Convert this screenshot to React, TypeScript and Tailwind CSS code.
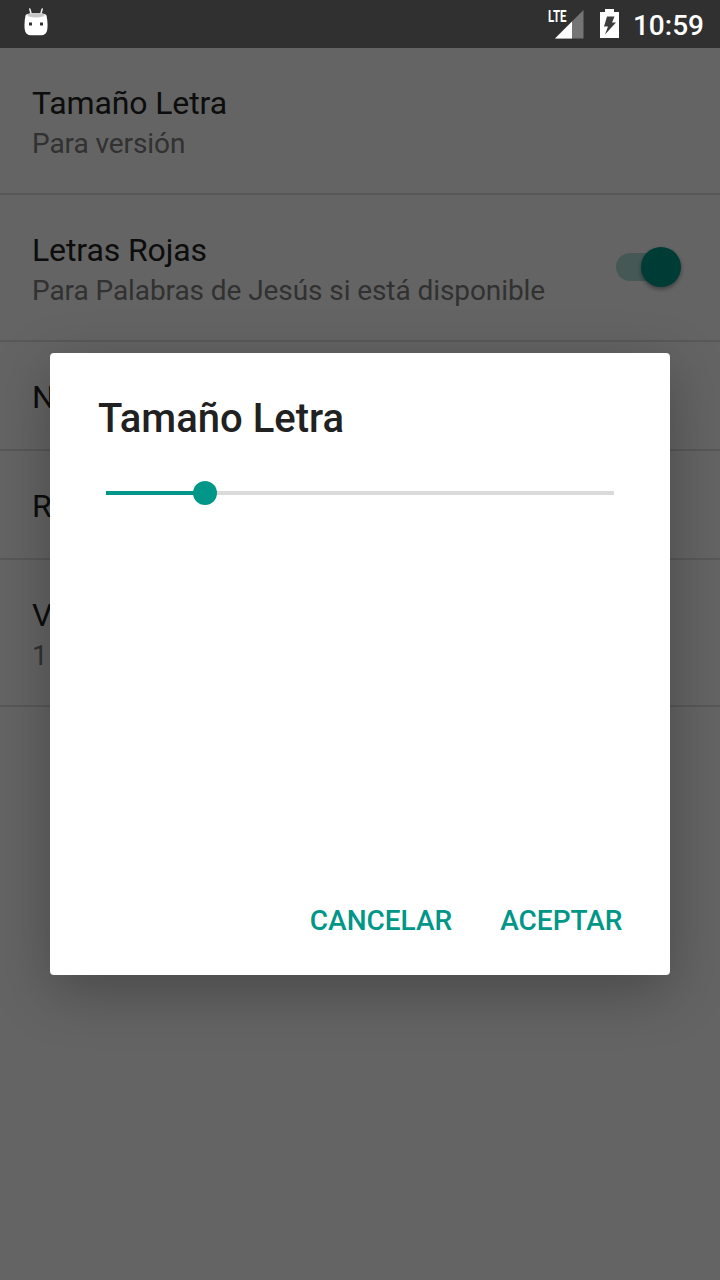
import { useState } from "react"
import type { ReactNode } from "react"

interface Preference {
  title: string
  summary?: string
  toggle?: boolean
}

const PREFERENCES: Preference[] = [
  { title: "Tamaño Letra", summary: "Para versión" },
  { title: "Letras Rojas", summary: "Para Palabras de Jesús si está disponible", toggle: true },
  { title: "N" },
  { title: "R" },
  { title: "V", summary: "1" },
]

export default function App() {
  return (
    <div className="relative flex h-[1280px] w-[720px] flex-col overflow-hidden bg-[#fafafa] font-['Roboto',sans-serif]">
      <StatusBar />
      <main className="flex flex-col">
        {PREFERENCES.map((pref) => (
          <PreferenceRow key={pref.title} {...pref} />
        ))}
      </main>

      {/* Backdrop and dialog */}
      <div className="absolute inset-x-0 top-12 bottom-0 bg-black/60 px-[50px] pt-[305px]">
        <FontSizeDialog />
      </div>
    </div>
  )
}

function StatusBar() {
  return (
    <header className="flex h-12 shrink-0 items-center bg-[#303030] pr-4 pl-6 text-white">
      {/* Debug notification */}
      <svg className="h-12 w-6" viewBox="0 0 24 48">
        <path d="M5.800 9l1.400 5M18.200 9l-1.400 5" stroke="#f0f0f0" strokeWidth="1.500" strokeLinecap="round" />
        <path
          d="M1.500 15.500Q2 13 12 13t10.500 2.500q1.600 7 .8 14Q22.500 35.300 17 35.300H7q-5.500 0-6.300-5.800Q0 22.500 1.500 15.500z"
          fill="#fff"
        />
        <ellipse cx="12" cy="15.200" rx="8.700" ry="2.300" fill="#c6c6c6" />
        <path d="M5 22.500h3v3H5zM16 22.500h3v3h-3z" fill="#333" />
      </svg>
      <div className="ml-auto flex items-center">
        <div className="relative">
          <span className="absolute top-[9px] left-0 origin-left scale-x-[0.69] text-[16.5px] leading-[16px] font-bold">
            LTE
          </span>
          <svg className="h-12 w-9" viewBox="0 0 36 48">
            <path d="M7 38.500L35.500 10v28.500z" fill="#757575" />
            <path d="M7 38.500L24 21.500v17z" fill="#fff" />
          </svg>
        </div>
        <svg className="ml-4 h-12 w-[19px]" viewBox="0 0 19 48">
          <path d="M5 9h9v3h5v26H0V12h5z" fill="#fff" />
          <path d="M7 16.500h7.500L12 22.500h4L5 34.500l3-8H4z" fill="#3c3c3c" />
        </svg>
        <span className="ml-3.5 pt-[3px] text-[28px] leading-8 font-medium">10:59</span>
      </div>
    </header>
  )
}

function PreferenceRow({ title, summary, toggle }: Preference) {
  return (
    <div className="flex items-start justify-between border-b-2 border-[#dcdcdc] pr-10 pl-8">
      <div className="flex flex-col pt-[34px] pb-[30px]">
        <span className="text-[32px] leading-[43px] tracking-[-0.12px] text-[#212121]">{title}</span>
        {summary && (
          <span className="text-[28px] leading-[38px] tracking-[-0.08px] text-[#7a7a7a]">{summary}</span>
        )}
      </div>
      {toggle && (
        <div className="mt-[52px] flex h-10 w-16 items-center">
          <div className="h-7 w-[52px] shrink-0 rounded-full bg-[#009688]/30" />
          <div className="-ml-[27px] size-10 shrink-0 rounded-full bg-[#009688] shadow-[0_2px_4px_rgba(0,0,0,0.4)]" />
        </div>
      )}
    </div>
  )
}

function FontSizeDialog() {
  const [value] = useState(19.5)

  return (
    <section className="flex h-[622px] w-[620px] flex-col rounded bg-white px-12 pt-[41px] shadow-[0_16px_56px_rgba(0,0,0,0.28)]">
      <h2 className="text-[40px] leading-[50px] font-medium text-[#212121]">Tamaño Letra</h2>
      <div className="mx-2 mt-[37px] flex h-6 items-center">
        <div className="h-1 bg-[#009688]" style={{ width: `${value}%` }} />
        <div className="z-10 -mx-3 size-6 shrink-0 rounded-full bg-[#009688]" />
        <div className="h-1 flex-1 bg-[#dadada]" />
      </div>
      <div className="mt-auto -mr-[0.5px] mb-8 flex justify-end gap-12">
        <DialogButton>CANCELAR</DialogButton>
        <DialogButton>ACEPTAR</DialogButton>
      </div>
    </section>
  )
}

function DialogButton({ children }: { children: ReactNode }) {
  return <button className="text-[28px] leading-[44px] font-medium text-[#009688]">{children}</button>
}
